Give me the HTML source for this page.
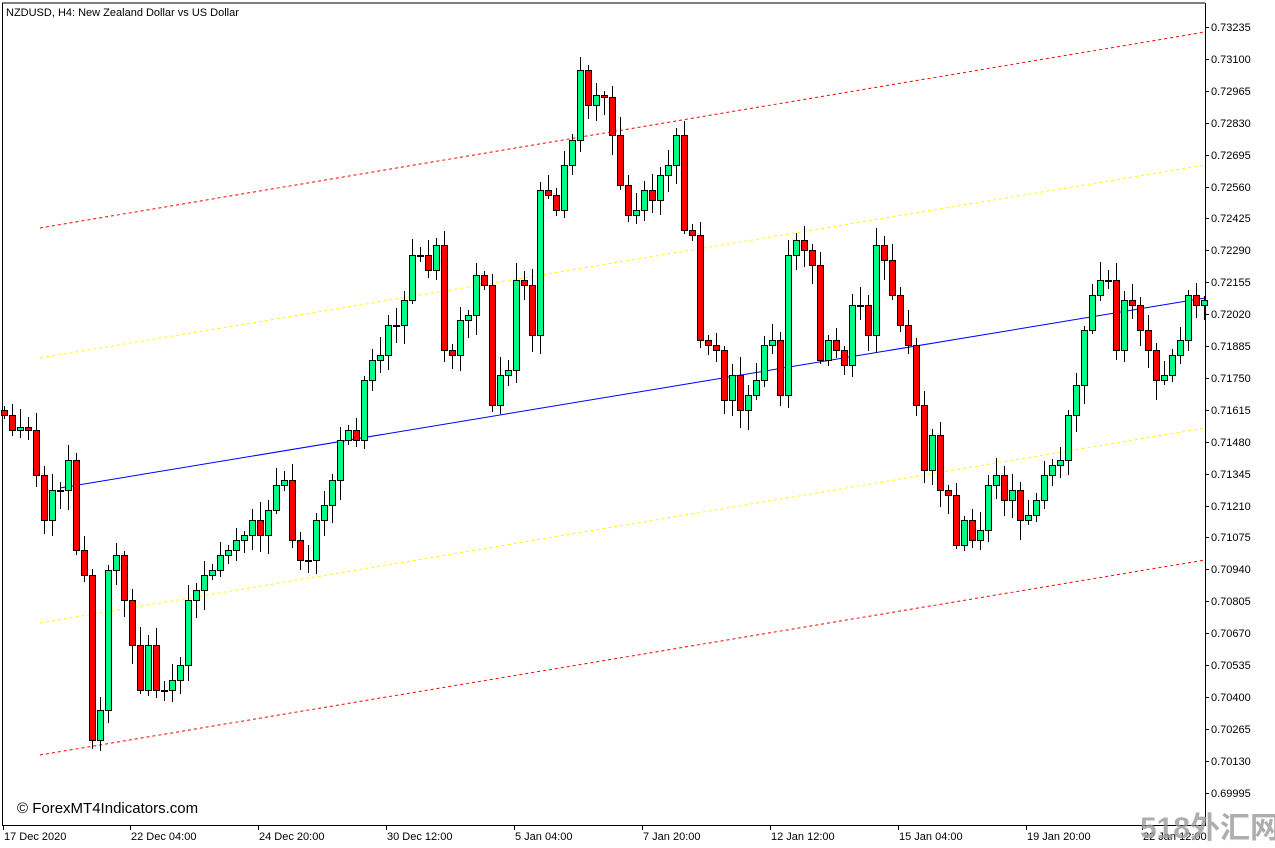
<!DOCTYPE html>
<html><head><meta charset="utf-8"><style>
html,body{margin:0;padding:0;background:#fff;width:1275px;height:848px;overflow:hidden;font-family:"Liberation Sans",sans-serif}
svg text{font-family:"Liberation Sans",sans-serif}
</style></head><body>
<svg id="c" width="1275" height="848" xmlns="http://www.w3.org/2000/svg" shape-rendering="crispEdges">
<rect x="0" y="0" width="1275" height="848" fill="#fff"/>
<line x1="2" y1="3" x2="1205" y2="3" stroke="#000"/>
<line x1="2.5" y1="3" x2="2.5" y2="825" stroke="#000"/>
<line x1="1205.5" y1="3" x2="1205.5" y2="825" stroke="#000"/>
<line x1="2" y1="825.5" x2="1206" y2="825.5" stroke="#000"/>
<g id="lines" shape-rendering="auto">
<line x1="40" y1="228" x2="1205" y2="32" stroke="#ff0000" stroke-dasharray="3,3"/>
<line x1="40" y1="358" x2="1205" y2="165" stroke="#ffff00" stroke-dasharray="3,3"/>
<line x1="60" y1="488" x2="1205" y2="298" stroke="#0000ff"/>
<line x1="40" y1="623" x2="1205" y2="428" stroke="#ffff00" stroke-dasharray="3,3"/>
<line x1="40" y1="755" x2="1205" y2="560" stroke="#ff0000" stroke-dasharray="3,3"/>
</g>
<g id="candles"></g>
<g id="axis" font-size="11" fill="#000"></g>
<text x="6" y="16" font-size="11">NZDUSD, H4:  New Zealand Dollar vs US Dollar</text>
<text x="17" y="813" font-size="15">© ForexMT4Indicators.com</text>
<text x="1140" y="838" font-size="30" font-weight="bold" fill="#9a9a9a" opacity="0.8" style='font-family:"Liberation Sans","Noto Sans CJK SC",sans-serif'>518外汇网</text>
</svg>
<script>
(function(){
var C=[415,430,427,430,475,520,490,490,460,550,575,740,710,570,555,600,645,690,645,690,690,680,665,600,590,575,570,555,550,540,535,520,535,510,485,480,540,560,560,520,505,480,440,430,440,380,360,355,325,325,300,255,255,270,245,350,355,320,315,275,285,405,375,370,280,285,335,190,195,210,165,140,70,105,95,97,135,185,215,210,190,200,175,165,135,230,235,340,345,350,400,375,410,395,380,345,340,395,255,240,250,265,360,340,350,365,305,305,335,245,260,295,325,345,405,470,435,490,495,545,520,540,530,485,475,500,490,520,515,500,475,465,460,415,385,330,295,280,280,350,300,305,330,350,380,375,355,340,295,305,300];
var s='',prev=410;
for(var i=0;i<C.length;i++){
 var x=4+8*i,o=prev,c=C[i];
 if(Math.abs(o-c)<2){c=o+1;}
 var tp=Math.min(o,c),bt=Math.max(o,c);
 var hi=tp-(4+((i*37)%15)),lo=bt+(4+((i*53)%17));
 var up=c<o;
 s+='<line x1="'+(x+0.5)+'" y1="'+hi+'" x2="'+(x+0.5)+'" y2="'+lo+'" stroke="#000"/>';
 s+='<rect x="'+(x-2.5)+'" y="'+(tp+0.5)+'" width="6" height="'+Math.max(1,bt-tp)+'" fill="'+(up?'#00ff80':'#ff0000')+'" stroke="#000"/>';
 prev=C[i];
}
document.getElementById('candles').innerHTML=s;
var a='',v=0.73235;
for(var k=0;k<25;k++){
 var y=Math.round(27+k*31.9);
 a+='<line x1="1205" y1="'+(y+0.5)+'" x2="1209" y2="'+(y+0.5)+'" stroke="#000"/>';
 a+='<text x="1211" y="'+(y+4)+'">'+(v-k*0.00135).toFixed(5)+'</text>';
}
var T=[[3,"17 Dec 2020"],[130,"22 Dec 04:00"],[258,"24 Dec 20:00"],[386,"30 Dec 12:00"],[514,"5 Jan 04:00"],[642,"7 Jan 20:00"],[770,"12 Jan 12:00"],[898,"15 Jan 04:00"],[1026,"19 Jan 20:00"],[1142,"22 Jan 12:00"]];
T.forEach(function(t){a+='<line x1="'+(t[0]+0.5)+'" y1="825" x2="'+(t[0]+0.5)+'" y2="830" stroke="#000"/><text x="'+(t[0]+1)+'" y="840">'+t[1]+'</text>';});
document.getElementById('axis').innerHTML=a;
})();
</script>
</body></html>
